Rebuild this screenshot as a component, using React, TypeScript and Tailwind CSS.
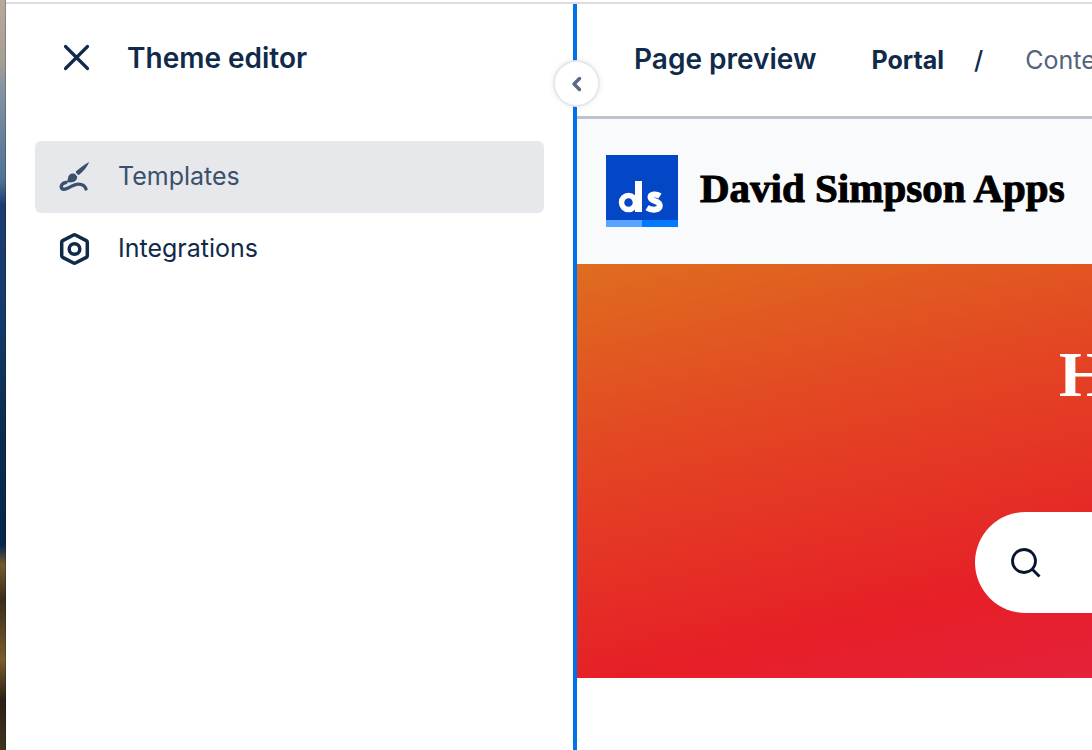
import React from "react";

function CloseIcon() {
  return (
    <svg viewBox="0 0 28 28" className="h-7 w-7" fill="none" stroke="currentColor" strokeWidth="3.200" strokeLinecap="round" aria-hidden="true">
      <path d="M2.500 2.500 24.500 24.500M24.500 2.500 2.500 24.500" />
    </svg>
  );
}

function BrushIcon() {
  return (
    <svg viewBox="0 0 32 32" className="h-8 w-8 shrink-0" fill="currentColor" aria-hidden="true">
      <path d="M30.300 1C25.500 3.500 20.500 7 16.800 10.600c.1 1.700 1.400 3.100 3.100 3.500C24 10.500 28 6.200 30.300 1Z" />
      <path d="M15.200 12.600c-3.300-.6-6 1.200-6.200 4.600-.1 1.500-.7 2.600-1.900 3.600 5 1.700 11.300.2 11.100-5-.7-1.300-1.800-2.500-3-3.200Z" />
      <path d="M7 21.500C3.500 21.800 1.800 24.300 2.400 26.500c.6 2.400 3.700 2.200 6.600.6 3.300-1.900 6.800-4 10.500-4 4 0 6.500 1.900 7.500 4.900" fill="none" stroke="currentColor" strokeWidth="3.400" strokeLinecap="round" />
    </svg>
  );
}

function HexIcon() {
  return (
    <svg viewBox="0 0 32 32" className="h-8 w-8 shrink-0" fill="none" stroke="currentColor" strokeWidth="3.500" strokeLinejoin="round" aria-hidden="true">
      <path d="M14.100 2.200a3 3 0 0 1 2.800 0L27.300 7.600a2 2 0 0 1 1 1.700V22.700a2 2 0 0 1-1 1.700L16.900 29.800a3 3 0 0 1-2.800 0L3.700 24.400a2 2 0 0 1-1-1.700V9.300a2 2 0 0 1 1-1.700Z" />
      <circle cx="15.500" cy="16" r="5.300" />
    </svg>
  );
}

function Logo() {
  return (
    <svg viewBox="0 0 72 72" className="h-[72px] w-[72px] shrink-0" aria-label="ds" role="img">
      <rect width="72" height="72" fill="#0346c6" />
      <rect y="65" width="36" height="7" fill="#5aa4ff" />
      <rect x="36" y="65" width="36" height="7" fill="#027bff" />
      <circle cx="22.500" cy="47.500" r="7" fill="none" stroke="white" strokeWidth="5.500" />
      <path d="M29 26h7v31h-7Z" fill="white" />
      <path d="M54 41c-4-2.500-9.500-2-9.500 1.300 0 4.700 9.300 2.700 9.300 8.200 0 4.800-7.800 5.300-12.800 2.300" fill="none" stroke="white" strokeWidth="6" />
    </svg>
  );
}

function Sidebar() {
  return (
    <aside className="w-[567px] shrink-0 px-[29px] pt-8">
      <header className="flex h-11 items-center gap-9 pl-7">
        <button type="button" aria-label="Close" className="text-[#102a4a]"><CloseIcon /></button>
        <h1 className="text-[28px] leading-10 font-semibold text-[#102a4a]">Theme editor</h1>
      </header>
      <nav className="mt-[61px] flex flex-col text-[25px] leading-8">
        <a href="#templates" className="flex h-[72px] items-center gap-[27px] rounded-md bg-[#e7e8ec] px-6 text-[#3a506b]">
          <BrushIcon />
          <span className="pb-0.5">Templates</span>
        </a>
        <a href="#integrations" className="flex h-[72px] items-center gap-[27px] rounded-md px-6 text-[#102a4a]">
          <HexIcon />
          <span className="pb-0.5">Integrations</span>
        </a>
      </nav>
    </aside>
  );
}

function Divider() {
  return (
    <div className="relative w-1 shrink-0 bg-[#0073ea]">
      <button type="button" aria-label="Collapse sidebar" className="absolute top-[58px] -left-[18px] flex h-[43px] w-[43px] items-center justify-center rounded-full bg-white text-[#596b84] shadow-[0_0_0_2px_#e6e8ec,0_0_8px_rgba(9,30,66,0.12)]">
        <svg viewBox="0 0 16 16" className="h-4 w-4" fill="none" stroke="currentColor" strokeWidth="3.500" strokeLinecap="round" strokeLinejoin="round" aria-hidden="true">
          <path d="M10.500 2.500 5 8l5.500 5.500" />
        </svg>
      </button>
    </div>
  );
}

function Preview() {
  return (
    <main className="flex min-w-0 grow flex-col overflow-hidden">
      <header className="flex h-[115px] shrink-0 items-center border-b-3 border-[#bcc4d0] pl-[57px] whitespace-nowrap text-[#102a4a]">
        <h2 className="pb-0.5 text-[28px] leading-10 font-semibold">Page preview</h2>
        <nav aria-label="Breadcrumb" className="ml-[55px] flex items-center gap-[30px] text-[25px] leading-8">
          <a href="#portal" className="font-bold">Portal</a>
          <span className="font-medium">/</span>
          <a href="#content" className="ml-3 text-[#52647e]">Conte</a>
        </nav>
      </header>
      <div className="flex h-[145px] shrink-0 items-center gap-[22px] bg-[#f9fafc] pb-0.5 pl-[29px] whitespace-nowrap">
        <Logo />
        <span className="pb-1.5 font-['Liberation_Serif',serif] text-[41px] leading-12 font-bold text-black [-webkit-text-stroke:1px_black]">David Simpson Apps</span>
      </div>
      <section className="flex h-[414px] shrink-0 flex-col bg-[linear-gradient(167deg,#df6d1f_0px,#e34823_180px,#e61f27_412px,#e6213b_519px)] pl-[398px]">
        <h3 className="mt-[75px] pl-[84px] font-['Liberation_Serif',serif] text-[64px] leading-[72px] font-bold text-white">H</h3>
        <label className="mt-[101px] flex h-[101px] shrink-0 items-center rounded-l-full bg-white pl-[35px] text-[#06142e]">
          <svg viewBox="0 0 32 32" className="h-8 w-8 shrink-0" fill="none" stroke="currentColor" strokeWidth="2.800" aria-hidden="true">
            <circle cx="14" cy="14" r="11.500" />
            <path d="m22 22 7.500 7.500" />
          </svg>
          <input type="search" aria-label="Search" className="w-0 grow bg-transparent text-2xl outline-none" />
        </label>
      </section>
    </main>
  );
}

export default function App() {
  return (
    <div className="flex min-h-screen overflow-hidden bg-white font-['Inter',sans-serif]">
      <div className="w-1.5 shrink-0 border-r border-black/20 bg-[linear-gradient(180deg,#b5aa9c_0px,#a89f94_60px,#8592a2_90px,#4f7294_180px,#1d3d70_205px,#163a68_320px,#0a2c4f_430px,#06274a_545px,#75592e_565px,#3a2d1b_600px,#7b5c2d_660px,#2b2115_700px,#40351c_750px)]" />
      <div className="flex min-w-0 grow flex-col pt-0.5">
        <div className="flex grow border-t-2 border-[#dcdcdc]">
          <Sidebar />
          <Divider />
          <Preview />
        </div>
      </div>
    </div>
  );
}
